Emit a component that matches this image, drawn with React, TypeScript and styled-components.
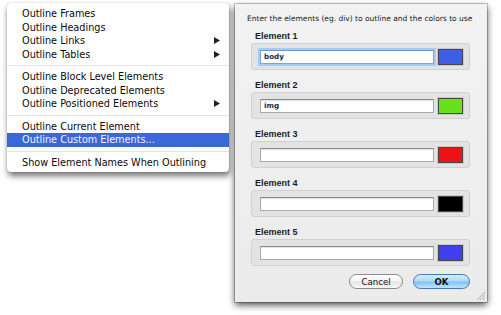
import React from "react";
import styled, { createGlobalStyle } from "styled-components";

const GlobalStyle = createGlobalStyle`
  html, body { margin: 0; padding: 0; background: #ffffff; }
  body { overflow: hidden; width: 501px; height: 315px; }
`;

const Stage = styled.div`
  display: flex;
  align-items: flex-start;
  padding-left: 7px;
  width: 501px;
  height: 315px;
  box-sizing: border-box;
`;

const Menu = styled.div`
  margin-top: 3px;
  width: 222px;
  box-sizing: border-box;
  padding: 4px 0 3px;
  background: #ffffff;
  border-radius: 4px;
  box-shadow: 1px 4px 6px rgba(0, 0, 0, 0.55), 0 0 1px rgba(0, 0, 0, 0.35);
  font-family: "DejaVu Sans", "Liberation Sans", sans-serif;
  font-size: 9.7px;
  color: #0a0a0a;
`;

const Item = styled.div<{ $active?: boolean }>`
  display: flex;
  align-items: center;
  justify-content: space-between;
  height: 13.5px;
  line-height: 13.5px;
  padding: 0 9px 0 15px;
  white-space: nowrap;
  background: ${(p) => (p.$active ? "#3c67d9" : "transparent")};
  color: ${(p) => (p.$active ? "#eef3ff" : "#0a0a0a")};
`;

const Separator = styled.div`
  height: 1px;
  margin: 4px 0;
  background: #e4e4e4;
`;

const Arrow = () => (
  <svg width="6" height="7" viewBox="0 0 6 7">
    <path d="M0 0 L6 3.5 L0 7 Z" fill="#222" />
  </svg>
);

const Dialog = styled.div`
  position: relative;
  margin-top: 4px;
  margin-left: 6px;
  width: 252px;
  height: 298px;
  box-sizing: border-box;
  padding: 9px 17px 0 16px;
  background: linear-gradient(#f2f2f2, #ebebeb);
  box-shadow: 0 3px 7px rgba(0, 0, 0, 0.7), 0 0 0 1px rgba(0, 0, 0, 0.2);
  display: flex;
  flex-direction: column;
`;

const Header = styled.div`
  margin-left: -4px;
  height: 12px;
  line-height: 12px;
  font-family: "DejaVu Sans", "Liberation Sans", sans-serif;
  font-size: 7.5px;
  color: #1a1a1a;
  white-space: nowrap;
`;

const Sections = styled.div`
  margin-top: 5px;
  display: flex;
  flex-direction: column;
  gap: 9px;
`;

const Section = styled.div`
  display: flex;
  flex-direction: column;
`;

const Label = styled.div`
  height: 13px;
  line-height: 13px;
  padding-left: 4px;
  font-family: "Liberation Sans", "DejaVu Sans", sans-serif;
  font-weight: bold;
  font-size: 9px;
  color: #1e1e1e;
`;

const Group = styled.div`
  height: 27px;
  box-sizing: border-box;
  display: flex;
  align-items: center;
  gap: 4px;
  padding: 1px 6px 0 8px;
  background: #e3e3e3;
  border: 1px solid #d0d0d0;
  border-radius: 3px;
`;

const Field = styled.div<{ $focused?: boolean }>`
  flex: 1;
  height: 14px;
  box-sizing: border-box;
  background: #ffffff;
  border: 1px solid ${(p) => (p.$focused ? "#7ea6d2" : "#a9a9a9")};
  border-top-color: ${(p) => (p.$focused ? "#6d98c8" : "#8a8a8a")};
  box-shadow: ${(p) =>
    p.$focused ? "0 0 0 2px #a8cbee" : "inset 0 1px 1px rgba(0,0,0,0.12)"};
  padding-left: 3px;
  font-family: "DejaVu Sans", "Liberation Sans", sans-serif;
  font-weight: bold;
  font-size: 7.2px;
  line-height: 12px;
  color: #1b2a48;
`;

const Swatch = styled.div<{ $color: string }>`
  width: 25px;
  height: 16px;
  box-sizing: border-box;
  border: 1px solid #474747;
  background: ${(p) => p.$color};
  box-shadow: 0 0 0 1px #c9c9c9;
`;

const Buttons = styled.div`
  margin-top: 8px;
  display: flex;
  justify-content: flex-end;
  gap: 10px;
`;

const Button = styled.div<{ $primary?: boolean }>`
  width: ${(p) => (p.$primary ? "57px" : "54px")};
  height: 15px;
  box-sizing: border-box;
  border-radius: 8px;
  display: flex;
  align-items: center;
  justify-content: center;
  font-family: "DejaVu Sans", "Liberation Sans", sans-serif;
  font-size: 8.6px;
  font-weight: ${(p) => (p.$primary ? 600 : 400)};
  color: #111;
  border: 1px solid ${(p) => (p.$primary ? "#4b78b2" : "#8a8a8a")};
  background: ${(p) =>
    p.$primary
      ? "linear-gradient(#d6eefd, #aad8f8 48%, #7fc1f1 52%, #bfe5fc)"
      : "linear-gradient(#ffffff, #f3f3f3 48%, #e3e3e3 52%, #f7f7f7)"};
`;

const Grip = styled.svg`
  position: absolute;
  right: 2px;
  bottom: 2px;
`;

const menuGroups: { label: string; sub?: boolean; active?: boolean }[][] = [
  [
    { label: "Outline Frames" },
    { label: "Outline Headings" },
    { label: "Outline Links", sub: true },
    { label: "Outline Tables", sub: true },
  ],
  [
    { label: "Outline Block Level Elements" },
    { label: "Outline Deprecated Elements" },
    { label: "Outline Positioned Elements", sub: true },
  ],
  [
    { label: "Outline Current Element" },
    { label: "Outline Custom Elements...", active: true },
  ],
  [{ label: "Show Element Names When Outlining" }],
];

const elements = [
  { value: "body", color: "#3d5fe8", focused: true },
  { value: "img", color: "#66e11c" },
  { value: "", color: "#ee1212" },
  { value: "", color: "#000000" },
  { value: "", color: "#3f3ff0" },
];

export default function App() {
  return (
    <>
      <GlobalStyle />
      <Stage>
        <Menu>
          {menuGroups.map((g, gi) => (
            <React.Fragment key={gi}>
              {gi > 0 && <Separator />}
              {g.map((it) => (
                <Item key={it.label} $active={it.active}>
                  <span>{it.label}</span>
                  {it.sub && <Arrow />}
                </Item>
              ))}
            </React.Fragment>
          ))}
        </Menu>
        <Dialog>
          <Header>Enter the elements (eg. div) to outline and the colors to use</Header>
          <Sections>
            {elements.map((e, i) => (
              <Section key={i}>
                <Label>Element {i + 1}</Label>
                <Group>
                  <Field $focused={e.focused}>{e.value}</Field>
                  <Swatch $color={e.color} />
                </Group>
              </Section>
            ))}
          </Sections>
          <Buttons>
            <Button>Cancel</Button>
            <Button $primary>OK</Button>
          </Buttons>
          <Grip width="9" height="9" viewBox="0 0 9 9">
            <path d="M9 1 L1 9 M9 4 L4 9 M9 7 L7 9" stroke="#9a9a9a" strokeWidth="0.8" />
          </Grip>
        </Dialog>
      </Stage>
    </>
  );
}
